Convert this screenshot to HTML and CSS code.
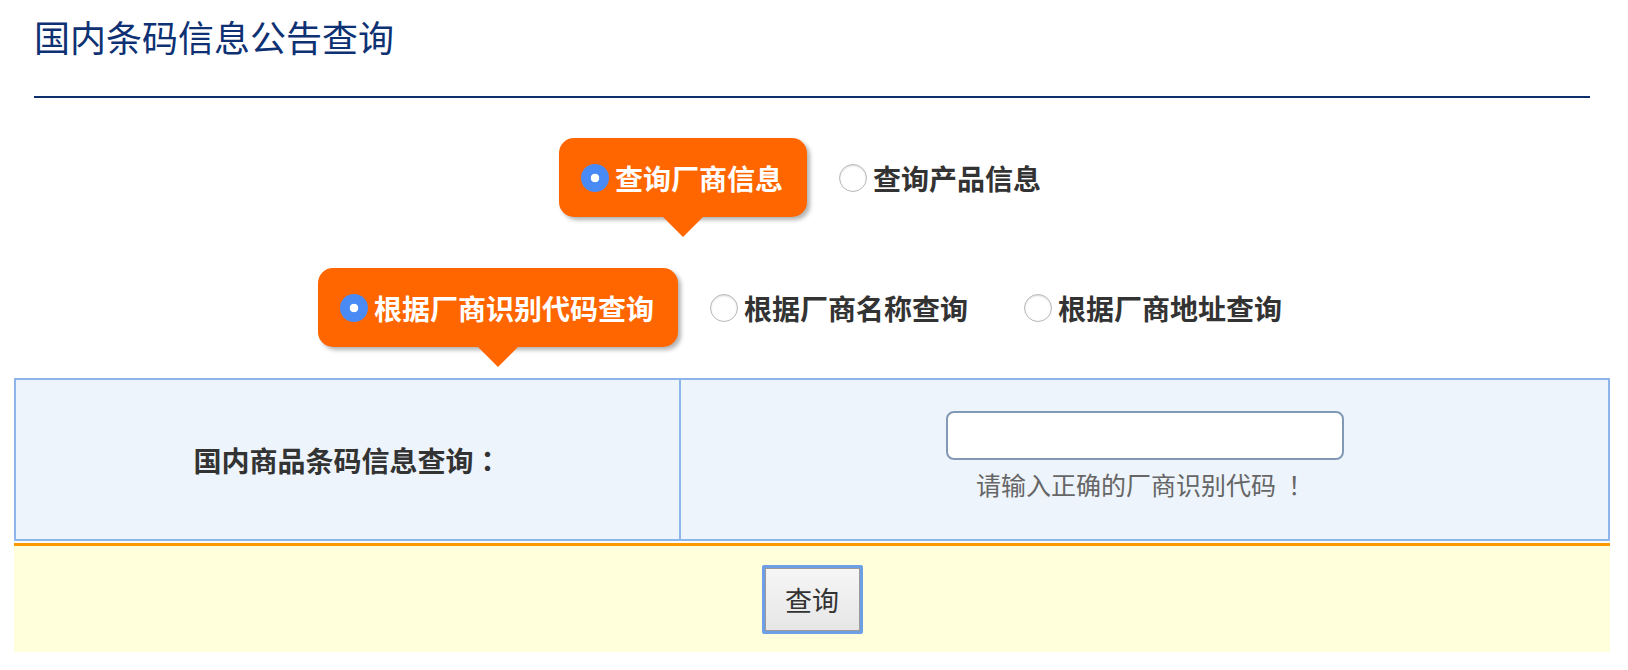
FILE: index.html
```html
<!DOCTYPE html>
<html lang="zh-CN">
<head>
  <meta charset="UTF-8">
  <title>国内条码信息公告查询</title>
  <link rel="stylesheet" href="styles.css">
</head>
<body>

  <div class="page">
    <div class="header">
      <h1>国内条码信息公告查询</h1>
    </div>

    <div class="tabs">
      <label class="option active">
        <input type="radio" name="kind" checked> 查询厂商信息
      </label>
      <label class="option">
        <input type="radio" name="kind"> 查询产品信息
      </label>
    </div>

    <div class="tabs sub">
      <label class="option active">
        <input type="radio" name="by" checked> 根据厂商识别代码查询
      </label>
      <label class="option">
        <input type="radio" name="by"> 根据厂商名称查询
      </label>
      <label class="option">
        <input type="radio" name="by"> 根据厂商地址查询
      </label>
    </div>

    <div class="form-row">
      <div class="form-label">国内商品条码信息查询<span class="punct">：</span></div>
      <div class="form-field">
        <input type="text" class="code-input">
        <div class="hint">请输入正确的厂商识别代码<span class="punct">！</span></div>
      </div>
    </div>

    <div class="submit-bar">
      <button type="button">查询</button>
    </div>
  </div>

</body>
</html>
```

FILE: styles.css
```css
body {
  margin: 0;
  font-family: "Noto Sans CJK SC", "Liberation Sans", sans-serif;
  color: #333;
  background: #fff;
}

/* centred full-width punctuation */
.punct {
  font-family: "Noto Sans CJK JP", "Noto Sans CJK SC", sans-serif;
}

.page {
  padding: 0 18px 0 14px;
}

.header {
  margin: 0 20px;
  padding: 14px 0 38px;
  border-bottom: 2px solid #0f2e6c;
}

.header h1 {
  margin: 0;
  font-size: 36px;
  line-height: 44px;
  font-weight: normal;
  color: #0d3173;
}

.tabs {
  display: flex;
  justify-content: center;
  gap: 10px;
  margin-top: 40px;
}

.tabs.sub {
  margin-top: 51px;
}

.option {
  position: relative;
  display: inline-flex;
  align-items: center;
  height: 79px;
  padding: 0 24px 0 22px;
  border-radius: 15px;
  font-size: 28px;
  font-weight: bold;
  color: #333;
  cursor: pointer;
}

.option.active {
  background: #ff6600;
  color: #fff;
  box-shadow: 3px 3px 4px rgba(0, 0, 0, 0.3);
}

.option.active::after {
  content: "";
  position: absolute;
  left: 50%;
  bottom: -20px;
  margin-left: -20px;
  border-left: 20px solid transparent;
  border-right: 20px solid transparent;
  border-top: 20px solid #ff6600;
}

.option input {
  appearance: none;
  -webkit-appearance: none;
  box-sizing: border-box;
  width: 28px;
  height: 28px;
  margin: 0 6px 0 0;
  border: 1px solid #b8b8b8;
  border-radius: 50%;
  background: #fff;
  box-shadow: inset 0 1px 2px rgba(0, 0, 0, 0.15);
}

.option input:checked {
  border: none;
  box-shadow: none;
  background: radial-gradient(circle, #fff 4px, #4a8af4 4.6px);
}

.form-row {
  display: flex;
  margin-top: 31px;
  min-height: 159px;
  border: 2px solid #8cb6ea;
  background: #edf4fc;
}

.form-label {
  width: 663px;
  border-right: 2px solid #8cb6ea;
  display: flex;
  align-items: center;
  justify-content: center;
  font-size: 28px;
  font-weight: bold;
  color: #333;
}

.form-field {
  flex: 1;
  display: flex;
  flex-direction: column;
  align-items: center;
  justify-content: center;
  padding-bottom: 7px;
}

.code-input {
  box-sizing: border-box;
  width: 398px;
  height: 49px;
  border: 2px solid #8199b5;
  border-radius: 8px;
  background: #fff;
  font-size: 22px;
  padding: 0 10px;
}

.hint {
  margin-top: 7px;
  font-size: 25px;
  line-height: 34px;
  color: #666;
}

.hint .punct {
  padding-left: 12px;
}

.submit-bar {
  margin-top: 2px;
  height: 106px;
  border-top: 3px solid #ff9900;
  background: #ffffdc;
  display: flex;
  align-items: center;
  justify-content: center;
}

button {
  width: 101px;
  height: 69px;
  border: 3px solid #6c9fe6;
  border-radius: 2px;
  box-shadow: inset 0 0 0 1px #9a9a9a;
  background: linear-gradient(#f6f6f6, #e6e6e6);
  font-family: inherit;
  font-size: 27px;
  color: #333;
  cursor: pointer;
}
```
